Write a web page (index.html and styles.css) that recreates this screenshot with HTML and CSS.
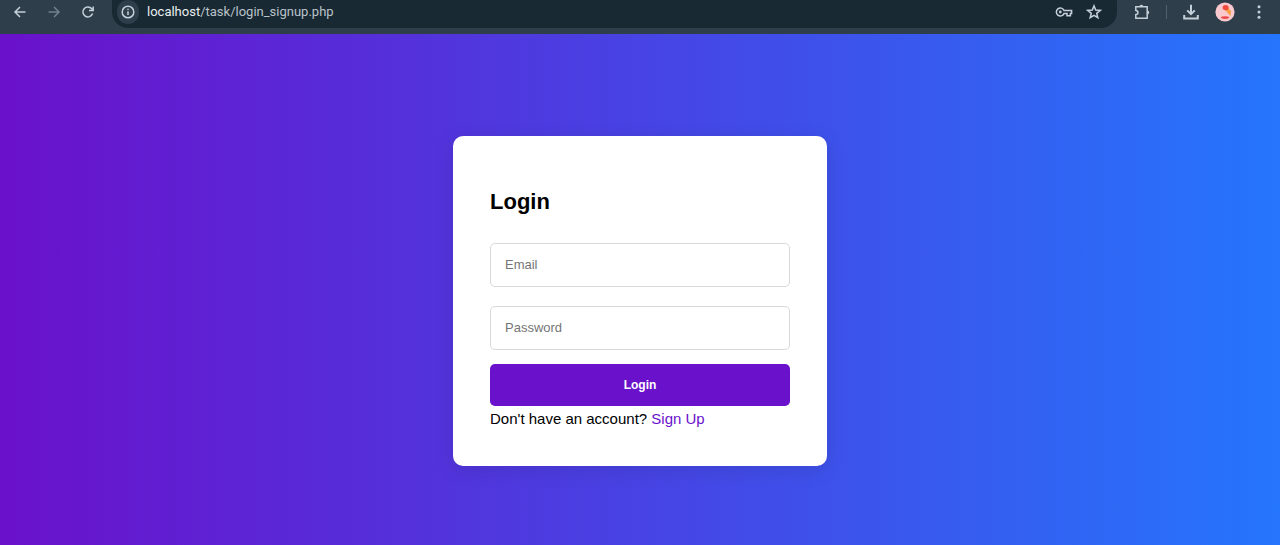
FILE: index.html
```html
<!DOCTYPE html>
<html lang="en">
<head>
<meta charset="utf-8">
<meta name="viewport" content="width=device-width, initial-scale=1">
<title>Login</title>
<link rel="stylesheet" href="styles.css">
</head>
<body>
<header class="toolbar">
  <nav class="nav" aria-label="Browser navigation">
    <button class="icon-button" type="button" aria-label="Back"><svg class="icon" viewBox="0 0 16 16"><path d="M13.5 8H3M8 3 3 8l5 5"/></svg></button>
    <button class="icon-button icon-button--dim" type="button" aria-label="Forward"><svg class="icon" viewBox="0 0 16 16"><path d="M2.5 8H13M8 3l5 5-5 5"/></svg></button>
    <button class="icon-button" type="button" aria-label="Reload"><svg class="icon" viewBox="0 0 16 16"><path d="M12.6 9.6A5 5 0 1 1 11.8 4.8L13 6.2M13.2 2.4v4.2H9"/></svg></button>
  </nav>
  <div class="address">
    <button class="site-info" type="button" aria-label="Site information"><svg class="icon" viewBox="0 0 16 16"><circle cx="8" cy="8" r="5.8"/><path d="M8 7.3v3.8M8 4.7v1.4"/></svg></button>
    <span class="url"><span class="url-host">localhost</span>/task/login_signup.php</span>
    <button class="icon-button" type="button" aria-label="Passwords"><svg class="icon icon--key" viewBox="0 0 18 16"><path d="M9 6.4A4 4 0 1 0 9 9.6h3v2.2h3.4V9.6h1.2V6.4z"/><circle class="solid" cx="5.3" cy="8" r="1.4"/></svg></button>
    <button class="icon-button" type="button" aria-label="Bookmark"><svg class="icon" viewBox="0 0 16 16"><path d="m8 1.9 1.7 4.2 4.5.3-3.5 2.9 1.1 4.4L8 11.3l-3.8 2.4 1.1-4.4-3.5-2.9 4.5-.3z"/></svg></button>
  </div>
  <div class="tools">
    <button class="icon-button" type="button" aria-label="Extensions"><svg class="icon" viewBox="0 0 16 16"><path d="M1.8 2.8h11.4v11.4H1.8v-3.6c2.9-.2 2.9-4 0-4.2z"/><path class="solid" d="M5.4 2.8a2 2 0 0 1 4 0zM13.2 6.5a2 2 0 0 1 0 4z"/></svg></button>
    <span class="divider"></span>
    <button class="icon-button" type="button" aria-label="Downloads"><svg class="icon icon--bold" viewBox="0 0 16 16"><path d="M8 .8v9M4.2 6.4 8 10.2l3.8-3.8M1.2 11v3.6h13.6V11"/></svg></button>
    <button class="icon-button" type="button" aria-label="Profile"><svg class="avatar" viewBox="0 0 20 20"><circle cx="10" cy="10" r="9.6" fill="#f9c9ce"/><path d="m9.5 7.5 6 6.5.6-4.5-3-4z" fill="#f7a044"/><ellipse cx="10.6" cy="5.6" rx="3" ry="2.6" fill="#f04a3e"/><ellipse cx="10" cy="15.6" rx="4" ry="1.4" fill="#ed4b48"/></svg></button>
    <button class="icon-button" type="button" aria-label="Menu"><svg class="icon" viewBox="0 0 16 16"><g class="solid"><circle cx="8" cy="2.8" r="1.5"/><circle cx="8" cy="8" r="1.5"/><circle cx="8" cy="13.2" r="1.5"/></g></svg></button>
  </div>
</header>
<main class="page">
  <section class="card">
    <h2 class="title">Login</h2>
    <form class="form">
      <input class="field" type="email" placeholder="Email" aria-label="Email">
      <input class="field" type="password" placeholder="Password" aria-label="Password">
      <button class="submit" type="submit">Login</button>
    </form>
    <p class="switch">Don't have an account? <a class="link" href="#signup">Sign Up</a></p>
  </section>
</main>
</body>
</html>
```
FILE: styles.css
```css
* { box-sizing: border-box; }

body {
  display: flex;
  flex-direction: column;
  min-height: 100vh;
  margin: 0;
  font-family: "Liberation Sans", Arial, sans-serif;
}

button { cursor: pointer; }

.toolbar {
  display: flex;
  align-items: flex-start;
  height: 34px;
  padding-right: 9px;
  background: #2f3e4b;
}

.nav {
  display: flex;
  gap: 10px;
  padding-left: 8px;
  margin-right: 12px;
}

.icon-button {
  display: flex;
  align-items: center;
  justify-content: center;
  width: 24px;
  height: 24px;
  padding: 0;
  border: 0;
  background: none;
  color: #c3d0da;
}

.icon-button--dim { color: #70808c; }

.icon {
  width: 16px;
  height: 16px;
  fill: none;
  stroke: currentColor;
  stroke-width: 1.5;
}

.icon--key { width: 18px; }

.icon--bold { stroke-width: 2; }

.icon .solid {
  fill: currentColor;
  stroke: none;
}

.address {
  display: flex;
  flex: 1;
  align-items: flex-start;
  gap: 6px;
  height: 28px;
  padding: 0 11px 0 5px;
  border-radius: 0 0 16px 16px;
  background: #192933;
}

.site-info {
  display: flex;
  align-items: center;
  justify-content: center;
  width: 22px;
  height: 24px;
  padding: 0;
  border: 0;
  border-radius: 11px;
  background: #2f3e4b;
  color: #c3d0da;
}

.url {
  flex: 1;
  padding-left: 2px;
  color: #b9c3ca;
  font: 13px/24px Roboto, "Noto Sans", sans-serif;
}

.url-host { color: #e8edf0; }

.tools {
  display: flex;
  align-items: center;
  gap: 10px;
  margin-left: 13px;
}

.divider {
  width: 1px;
  height: 14px;
  margin: 0 2px;
  background: #50606d;
}

.avatar {
  width: 20px;
  height: 20px;
}

.page {
  display: flex;
  flex: 1;
  align-items: center;
  justify-content: center;
  padding: 22px 16px 0;
  background: linear-gradient(to right, #6a11cb, #2575fc);
}

.card {
  width: 100%;
  max-width: 374px;
  padding: 52px 37px 36px;
  border-radius: 10px;
  background: #fff;
  box-shadow: 0 4px 20px rgba(0, 0, 0, 0.1);
}

.title {
  margin: 0 0 27px;
  font-size: 22px;
  line-height: 28px;
}

.form {
  display: flex;
  flex-direction: column;
}

.field {
  width: 100%;
  height: 44px;
  margin: 0 0 19px;
  padding: 0 14px;
  border: 1px solid #d9d9dc;
  border-radius: 5px;
  font: 13px "Liberation Sans", Arial, sans-serif;
}

.field + .submit { margin-top: -5px; }

.field::placeholder { color: #757575; }

.submit {
  height: 42px;
  border: 0;
  border-radius: 5px;
  background: #6a11cb;
  color: #fff;
  font: bold 12px "Liberation Sans", Arial, sans-serif;
}

.switch {
  margin: 0;
  padding-top: 2px;
  font-size: 15px;
  line-height: 22px;
}

.link {
  color: #6a11cb;
  text-decoration: none;
}
```
